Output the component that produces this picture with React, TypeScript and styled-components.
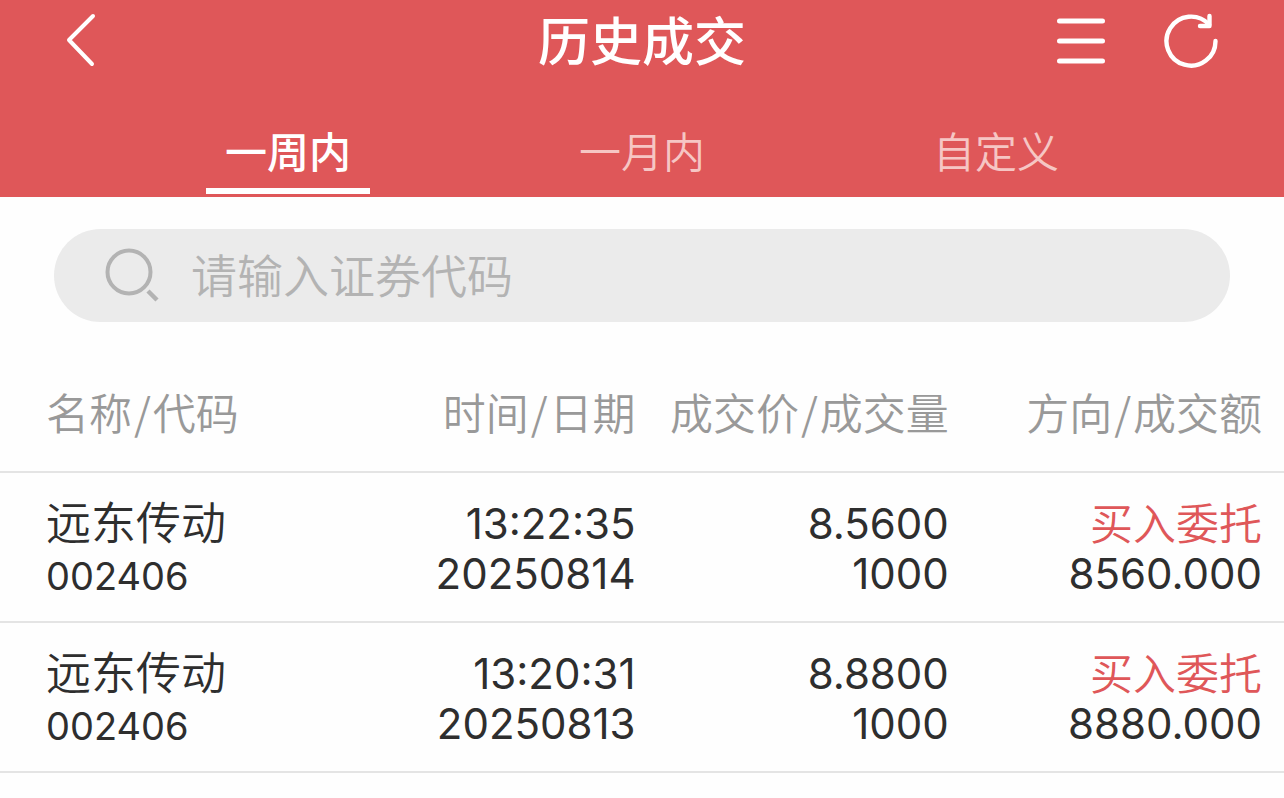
import React, { useState } from 'react';
import styled, { createGlobalStyle } from 'styled-components';

const RED = '#df5759';
const INK = '#2e2e2e';

const GlobalStyle = createGlobalStyle`
  * { box-sizing: border-box; }
  body {
    margin: 0;
    background: #fefefe;
    color: ${INK};
    font-family: Inter, "Noto Sans CJK SC", sans-serif;
  }
  button, input { font: inherit; color: inherit; }
`;

const Header = styled.header`
  background: ${RED};
  color: #fff;
  padding-bottom: 3px;
`;

const TitleBar = styled.div`
  display: grid;
  grid-template-columns: 1fr auto 1fr;
  align-items: center;
  height: 82px;
  padding: 0 60px;
`;

const Title = styled.h1`
  margin: 0;
  padding-top: 4px;
  font-size: 52px;
  line-height: 78px;
  font-weight: 500;
`;

const Actions = styled.div`
  display: flex;
  justify-content: flex-end;
  gap: 54px;
`;

const IconButton = styled.button`
  display: flex;
  padding: 0;
  border: 0;
  background: none;
  cursor: pointer;
  justify-self: start;
`;

const Tabs = styled.nav`
  display: grid;
  grid-template-columns: repeat(3, 1fr);
  justify-items: center;
  padding: 0 111px;
  height: 112px;
`;

const Tab = styled.button<{ $active: boolean }>`
  width: 164px;
  padding: 36px 0 0;
  border: 0;
  border-bottom: 6px solid ${p => (p.$active ? '#fff' : 'transparent')};
  background: none;
  color: ${p => (p.$active ? '#fff' : '#f6c6c4')};
  font-size: 42px;
  line-height: 68px;
  font-weight: ${p => (p.$active ? 500 : 350)};
  cursor: pointer;
`;

const SearchBox = styled.label`
  display: flex;
  align-items: center;
  gap: 31px;
  height: 93px;
  margin: 32px 54px 0;
  padding: 0 50px;
  border-radius: 47px;
  background: #ebebeb;
`;

const SearchInput = styled.input`
  flex: 1;
  min-width: 0;
  height: 92px;
  padding: 0;
  border: 0;
  outline: 0;
  background: none;
  font-size: 46px;
  font-weight: 350;
  &::placeholder { color: #b3b3b3; opacity: 1; }
`;

const Table = styled.table`
  width: 100%;
  margin-top: 32px;
  border-collapse: separate;
  border-spacing: 0;
  table-layout: fixed;
`;

const HeadCell = styled.th<{ $width: string }>`
  width: ${p => p.$width};
  height: 119px;
  padding: 0 0 4px;
  border-bottom: 2px solid #e4e4e4;
  color: #999;
  font-family: "Noto Sans CJK SC", sans-serif;
  font-size: 43px;
  line-height: 60px;
  font-weight: 350;
  text-align: right;
  white-space: nowrap;
  &:first-child { padding-left: 46px; text-align: left; }
  &:last-child { padding-right: 22px; }
`;

const Slash = styled.span`
  padding: 0 2px;
`;

const Cell = styled.td`
  height: 150px;
  padding: 24px 0 0;
  border-bottom: 2px solid #e4e4e4;
  font-size: 42px;
  line-height: 50px;
  text-align: right;
  vertical-align: top;
  white-space: nowrap;
  &:first-child { padding-left: 46px; text-align: left; }
  &:last-child { padding-right: 22px; }
`;

const Line = styled.div`
  height: 50px;
  padding-top: 2px;
`;

const Name = styled(Line)`
  height: 52px;
  font-size: 45px;
  font-weight: 350;
`;

const Code = styled(Line)`
  font-size: 38px;
`;

const Side = styled(Line)`
  color: ${RED};
  font-size: 43px;
  font-weight: 350;
`;

const columns = [
  { parts: ['名称', '代码'], width: '28%' },
  { parts: ['时间', '日期'], width: '21.5%' },
  { parts: ['成交价', '成交量'], width: '24.4%' },
  { parts: ['方向', '成交额'], width: '26.1%' },
];

const trades = [
  { name: '远东传动', code: '002406', time: '13:22:35', date: '20250814', price: '8.5600', volume: '1000', side: '买入委托', amount: '8560.000' },
  { name: '远东传动', code: '002406', time: '13:20:31', date: '20250813', price: '8.8800', volume: '1000', side: '买入委托', amount: '8880.000' },
];

const BackIcon = () => (
  <svg width="40" height="60" viewBox="0 0 40 60" fill="none" stroke="#fff" strokeWidth="4" strokeLinecap="round" strokeLinejoin="round">
    <path d="M33 5 9 29 32 53" />
  </svg>
);

const MenuIcon = () => (
  <svg width="60" height="60" viewBox="0 0 60 60" fill="none" stroke="#fff" strokeWidth="5" strokeLinecap="round">
    <path d="M9.500 10h43M9.500 30h43M9.500 50h43" />
  </svg>
);

const RefreshIcon = () => (
  <svg width="60" height="60" viewBox="0 0 60 60" fill="none" stroke="#fff" strokeWidth="4.400" strokeLinecap="round" strokeLinejoin="round">
    <path d="M51.500 30A24.500 24.500 0 1 1 45 13.500" />
    <path d="M45.500 5V15H36" />
  </svg>
);

const SearchIcon = () => (
  <svg width="56" height="56" viewBox="0 0 56 56" fill="none" stroke="#b3b3b3" strokeWidth="4">
    <circle cx="25" cy="24" r="21.500" />
    <path d="M44 43 53 52" strokeWidth="4.500" />
  </svg>
);

const tabs = ['一周内', '一月内', '自定义'];

export default function App() {
  const [active, setActive] = useState(0);
  return (
    <>
      <GlobalStyle />
      <Header>
        <TitleBar>
          <IconButton aria-label="返回"><BackIcon /></IconButton>
          <Title>历史成交</Title>
          <Actions>
            <IconButton aria-label="菜单"><MenuIcon /></IconButton>
            <IconButton aria-label="刷新"><RefreshIcon /></IconButton>
          </Actions>
        </TitleBar>
        <Tabs>
          {tabs.map((label, i) => (
            <Tab key={label} $active={i === active} onClick={() => setActive(i)}>{label}</Tab>
          ))}
        </Tabs>
      </Header>
      <main>
        <SearchBox>
          <SearchIcon />
          <SearchInput type="text" aria-label="证券代码" placeholder="请输入证券代码" />
        </SearchBox>
        <Table>
          <thead>
            <tr>
              {columns.map(({ parts, width }) => (
                <HeadCell key={parts[0]} $width={width} scope="col">
                  {parts[0]}<Slash>/</Slash>{parts[1]}
                </HeadCell>
              ))}
            </tr>
          </thead>
          <tbody>
            {trades.map(t => (
              <tr key={t.date}>
                <Cell><Name>{t.name}</Name><Code>{t.code}</Code></Cell>
                <Cell><Line>{t.time}</Line><Line>{t.date}</Line></Cell>
                <Cell><Line>{t.price}</Line><Line>{t.volume}</Line></Cell>
                <Cell><Side>{t.side}</Side><Line>{t.amount}</Line></Cell>
              </tr>
            ))}
          </tbody>
        </Table>
      </main>
    </>
  );
}
